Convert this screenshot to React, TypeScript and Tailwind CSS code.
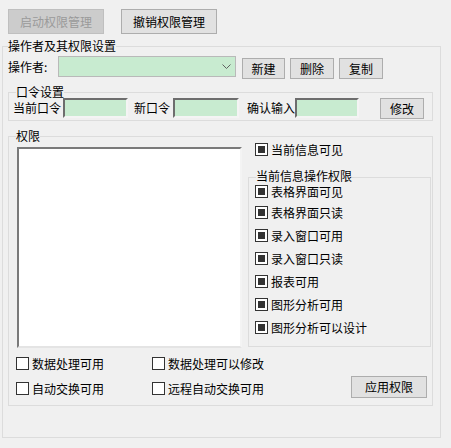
import type { ReactNode } from "react"

const FONT = { fontFamily: '"Noto Sans CJK SC", "Microsoft YaHei", sans-serif' }

function Btn({ children, className = "", disabled = false }: { children: ReactNode; className?: string; disabled?: boolean }) {
  return (
    <div
      className={
        "flex items-center justify-center border " +
        (disabled ? "border-[#bfbfbf] bg-[#cccccc] text-[#9a9a9a] " : "border-[#adadad] bg-[#e1e1e1] text-black ") +
        className
      }
    >
      {children}
    </div>
  )
}

// sunken green edit box
function Edit({ className = "" }: { className?: string }) {
  return (
    <div
      className={
        "h-[20px] border-2 border-t-[#6d6d6d] border-l-[#6d6d6d] border-r-[#f4f4f4] border-b-[#f4f4f4] bg-[#c8ebd0] " +
        className
      }
    />
  )
}

function Check({ label, checked = false }: { label: string; checked?: boolean }) {
  return (
    <div className="flex h-[13px] items-center gap-[3px]">
      <div className="h-[13px] w-[13px] shrink-0 border border-[#333333] bg-white p-[2px]">
        {checked && <div className="h-full w-full bg-[#333333]" />}
      </div>
      <span className="whitespace-nowrap leading-[13px]">{label}</span>
    </div>
  )
}

function Group({
  label,
  className = "",
  labelPos = "left-[7px] top-[-7px]",
  children,
}: {
  label: string
  className?: string
  labelPos?: string
  children?: ReactNode
}) {
  return (
    <div className={"relative border border-[#dcdcdc] " + className}>
      <span className={"absolute bg-[#f0f0f0] leading-[12px] whitespace-nowrap " + labelPos}>{label}</span>
      {children}
    </div>
  )
}

export default function App() {
  const ops = ["表格界面可见", "表格界面只读", "录入窗口可用", "录入窗口只读", "报表可用", "图形分析可用", "图形分析可以设计"]

  return (
    <div className="h-[448px] w-[451px] overflow-hidden bg-[#f0f0f0] pt-[9px] text-[12px] leading-none text-black" style={FONT}>
      {/* top buttons */}
      <div className="flex gap-[17px] pl-[8px]">
        <Btn disabled className="h-[25px] w-[96px]">启动权限管理</Btn>
        <Btn className="h-[25px] w-[96px]">撤销权限管理</Btn>
      </div>

      <Group label="操作者及其权限设置" labelPos="left-[5px] top-[-7px]" className="ml-[2px] mt-[12px] h-[392px] w-[439px]">
        {/* operator row */}
        <div className="mt-[9px] flex h-[22px] items-start pl-[5px]">
          <span className="mt-[4px] w-[50px] leading-[14px]">操作者:</span>
          <div className="flex h-[21px] w-[178px] items-center justify-end border border-[#b9b9b9] bg-[#c8ebd0] pr-[4px]">
            <svg width="9" height="6" viewBox="0 0 9 6">
              <path d="M0.5 0.5 L4.5 4.5 L8.5 0.5" fill="none" stroke="#606060" strokeWidth="1" />
            </svg>
          </div>
          <Btn className="ml-[6px] mt-[2px] h-[21px] w-[43px]">新建</Btn>
          <Btn className="ml-[5px] mt-[2px] h-[21px] w-[44px]">删除</Btn>
          <Btn className="ml-[5px] mt-[2px] h-[21px] w-[44px]">复制</Btn>
        </div>

        {/* password */}
        <Group label="口令设置" className="ml-[5px] mt-[14px] h-[29px] w-[425px]">
          <div className="mt-[5px] flex items-start pl-[4px]">
            <span className="mt-[3px] w-[50px] leading-[14px]">当前口令</span>
            <Edit className="w-[65px]" />
            <span className="ml-[6px] mt-[3px] w-[39px] leading-[14px]">新口令</span>
            <Edit className="w-[66px]" />
            <span className="ml-[8px] mt-[3px] w-[48px] leading-[14px]">确认输入</span>
            <Edit className="w-[64px]" />
            <Btn className="ml-[21px] h-[21px] w-[44px]">修改</Btn>
          </div>
        </Group>

        {/* permissions */}
        <Group label="权限" className="ml-[5px] mt-[15px] h-[270px] w-[425px]">
          <div className="flex items-start">
            <div className="ml-[8px] mt-[10px] h-[201px] w-[225px] border-2 border-t-[#7a7a7a] border-l-[#7a7a7a] border-r-[#f4f4f4] border-b-[#e4e4e4] bg-white" />
            <div className="ml-[6px] flex flex-col">
              <div className="ml-[7px] mt-[6px]">
                <Check label="当前信息可见" checked />
              </div>
              <Group label="当前信息操作权限" labelPos="left-[7px] top-[-8px]" className="mt-[21px] h-[170px] w-[183px]">
                <div className="flex flex-col gap-[10px] pl-[6px] pt-[7px]">
                  {ops.map((o, i) => (
                    <div key={o} className={i === 1 ? "-mt-[2px]" : ""}>
                      <Check label={o} checked />
                    </div>
                  ))}
                </div>
              </Group>
            </div>
          </div>

          <div className="mt-[9px] flex items-start pl-[7px] pr-[5px]">
            <div className="grid grid-cols-[136px_auto] gap-y-[12px]">
              <Check label="数据处理可用" />
              <Check label="数据处理可以修改" />
              <Check label="自动交换可用" />
              <Check label="远程自动交换可用" />
            </div>
            <Btn className="ml-auto mt-[19px] h-[22px] w-[76px]">应用权限</Btn>
          </div>
        </Group>
      </Group>
    </div>
  )
}
